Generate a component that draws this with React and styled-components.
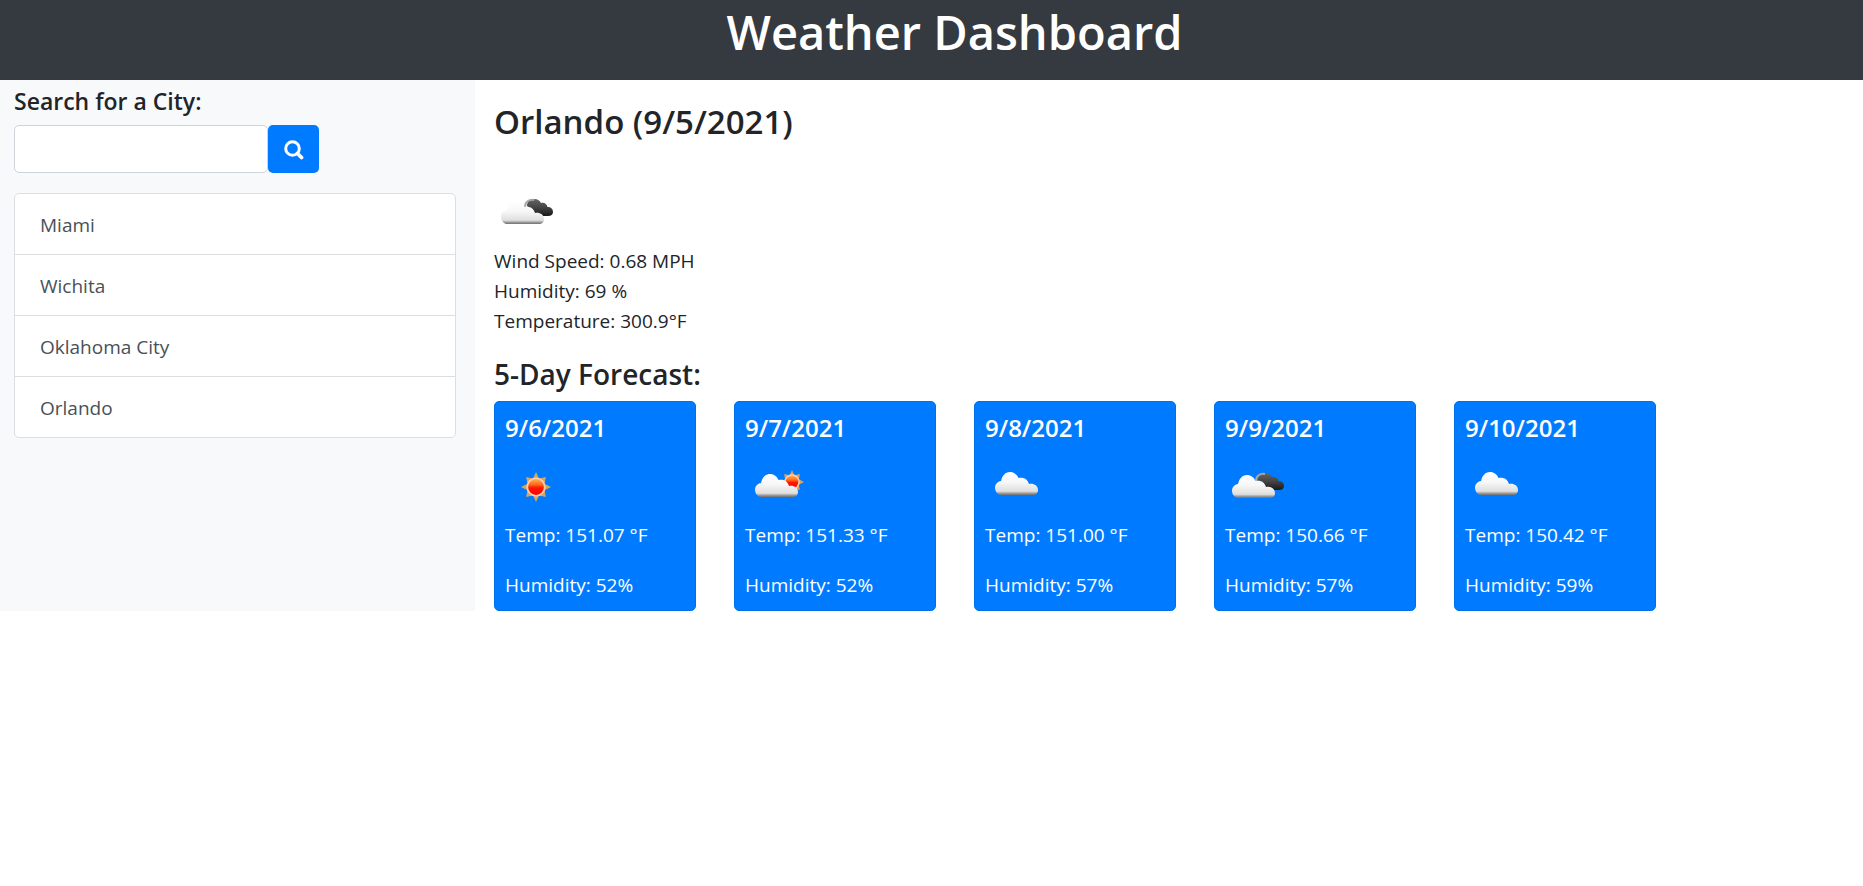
import React from 'react';
import styled, { createGlobalStyle } from 'styled-components';

const GlobalStyle = createGlobalStyle`
  *, *::before, *::after { box-sizing: border-box; }
  body {
    margin: 0;
    background: #fff;
    color: #212529;
    font-family: 'Segoe UI', 'Open Sans', 'Noto Sans', sans-serif;
    font-size: 19px;
    line-height: 30px;
  }
  h1, h2, h3, h4, p, ul { margin: 0; padding: 0; font-weight: 600; }
  p { font-weight: 400; }
`;

const Header = styled.header`
  background: #343a40;
  color: #fff;
  padding: 2px 0 18px 46px;
  text-align: center;
`;

const Title = styled.h1`
  font-size: 47px;
  line-height: 60px;
`;

const Layout = styled.div`
  display: flex;
`;

const Sidebar = styled.aside`
  flex: 0 0 25.5%;
  background: #f8f9fa;
  padding: 6px 19px 0 14px;
`;

const SearchLabel = styled.label`
  display: block;
  margin-bottom: 9px;
  font-size: 23px;
  font-weight: 600;
`;

const SearchForm = styled.form`
  display: flex;
  margin-bottom: 20px;
`;

const SearchInput = styled.input`
  width: 254px;
  height: 48px;
  padding: 8px 15px;
  border: 1px solid #ced4da;
  border-radius: 5px;
  background: #fff;
  color: #495057;
  font: inherit;
`;

const SearchButton = styled.button`
  display: flex;
  align-items: center;
  justify-content: center;
  width: 51px;
  height: 48px;
  padding: 2px 0 0;
  border: 0;
  border-radius: 5px;
  background: #007bff;
  color: #fff;
  cursor: pointer;
`;

const CityList = styled.ul`
  list-style: none;
  border: 1px solid #dcdfe2;
  border-radius: 5px;
  background: #fff;
  overflow: hidden;
`;

const CityItem = styled.li`
  & + & { border-top: 1px solid #dcdfe2; }
`;

const CityButton = styled.button`
  display: block;
  width: 100%;
  padding: 16px 25px 14px;
  border: 0;
  background: transparent;
  color: #495057;
  font: inherit;
  font-weight: 400;
  text-align: left;
  cursor: pointer;
`;

const Main = styled.main`
  flex: 1;
  min-width: 0;
  padding: 21px 19px 0;
`;

const CityHeading = styled.h2`
  margin-bottom: 38px;
  font-size: 33px;
  line-height: 42px;
`;

const ForecastHeading = styled.h3`
  margin: 20px 0 9px;
  font-size: 28px;
  line-height: 36px;
`;

const WeatherIcon = styled.svg`
  display: block;
  width: 62px;
  height: 62px;
  margin-bottom: 3px;
`;

const Cards = styled.div`
  display: flex;
  flex-wrap: wrap;
  gap: 38px;
`;

const Card = styled.article`
  width: 202px;
  padding: 10px;
  border: 1px solid #0070e8;
  border-radius: 5px;
  background: #007bff;
  color: #fff;
`;

const CardDate = styled.h4`
  margin: 1px 0 12px;
  font-size: 24px;
  line-height: 30px;
`;

const CardLine = styled.p`
  & + & { margin-top: 20px; }
`;

const Gradients = () => (
  <svg width="0" height="0" style={{ position: 'absolute' }} aria-hidden="true">
    <defs>
      <linearGradient id="cloud" x1="0" y1="0" x2="0" y2="1">
        <stop offset="0" stopColor="#fff" />
        <stop offset="0.45" stopColor="#f7f7f7" />
        <stop offset="0.84" stopColor="#dedede" />
        <stop offset="0.93" stopColor="#999" />
        <stop offset="1" stopColor="#707070" />
      </linearGradient>
      <linearGradient id="dark" x1="0" y1="0" x2="0" y2="1">
        <stop offset="0" stopColor="#666" />
        <stop offset="0.5" stopColor="#444" />
        <stop offset="1" stopColor="#181818" />
      </linearGradient>
      <linearGradient id="sun" x1="0" y1="0" x2="0" y2="1">
        <stop offset="0" stopColor="#ffb04e" />
        <stop offset="0.35" stopColor="#ff6a20" />
        <stop offset="0.55" stopColor="#ff1500" />
        <stop offset="1" stopColor="#f00" />
      </linearGradient>
    </defs>
  </svg>
);

const Sun = ({ x, y, s = 1 }) => (
  <g transform={`translate(${x} ${y}) scale(${s})`}>
    <path
      fill="#dba35c"
      d="M0-15 3-8.500 9.900-9.900 8.500-3.300 15 0 8.500 3.300 9.900 9.900 3 8.500 0 15-3 8.500-9.900 9.900-8.500 3.300-15 0-8.500-3.300-9.900-9.900-3-8.500Z"
    />
    <circle r="9.600" fill="#ffd0b0" />
    <circle r="7.900" fill="url(#sun)" />
  </g>
);

const Cloud = ({ x, y }) => (
  <path
    transform={`translate(${x} ${y})`}
    fill="url(#cloud)"
    d="M5 23C2 22 0 19 0 16 0 12 2.500 9.500 6 9 7 4 10 0 15 0 19 0 22 2.500 23.500 6 28 4.800 32.500 6.500 34 12 38 11 43 13 43 18 43 21 41 23 38 23Z"
  />
);

const DarkCloud = ({ x, y }) => (
  <g transform={`translate(${x} ${y})`}>
    <path fill="url(#dark)" d="M1 7C1 3 4 0 8 0 12 0 14 2 15 4 18 3 21 5 21.500 8 25 8 27 10 27 13 27 15.500 25 17 22 17H12Z" />
    <path d="M-1 8C-1 3 3 0 8 1" fill="none" stroke="#a6a6a6" strokeWidth="2" />
  </g>
);

const drawings = {
  sun: <Sun x={31} y={32} />,
  partly: (
    <>
      <Sun x={47} y={27} s={0.8} />
      <Cloud x={10} y={19} />
    </>
  ),
  cloudy: <Cloud x={10} y={17} />,
  broken: (
    <>
      <DarkCloud x={32} y={18} />
      <Cloud x={7} y={20} />
    </>
  ),
};

const Weather = ({ kind }) => (
  <WeatherIcon viewBox="0 0 62 62" role="img" aria-label={kind}>
    {drawings[kind]}
  </WeatherIcon>
);

const cities = ['Miami', 'Wichita', 'Oklahoma City', 'Orlando'];

const forecast = [
  { date: '9/6/2021', kind: 'sun', temp: '151.07', humidity: 52 },
  { date: '9/7/2021', kind: 'partly', temp: '151.33', humidity: 52 },
  { date: '9/8/2021', kind: 'cloudy', temp: '151.00', humidity: 57 },
  { date: '9/9/2021', kind: 'broken', temp: '150.66', humidity: 57 },
  { date: '9/10/2021', kind: 'cloudy', temp: '150.42', humidity: 59 },
];

export default function App() {
  return (
    <>
      <GlobalStyle />
      <Gradients />
      <Header>
        <Title>Weather Dashboard</Title>
      </Header>
      <Layout>
        <Sidebar>
          <SearchLabel htmlFor="city">Search for a City:</SearchLabel>
          <SearchForm onSubmit={(e) => e.preventDefault()}>
            <SearchInput id="city" type="text" />
            <SearchButton type="submit" aria-label="Search">
              <svg width="20" height="20" viewBox="0 0 20 20" fill="none" stroke="currentColor" aria-hidden="true">
                <circle cx="8.500" cy="8.500" r="6.800" strokeWidth="3" />
                <path d="M13.500 13.500l4 4" strokeWidth="3.800" strokeLinecap="round" />
              </svg>
            </SearchButton>
          </SearchForm>
          <CityList>
            {cities.map((city) => (
              <CityItem key={city}>
                <CityButton type="button">{city}</CityButton>
              </CityItem>
            ))}
          </CityList>
        </Sidebar>
        <Main>
          <CityHeading>Orlando (9/5/2021)</CityHeading>
          <Weather kind="broken" />
          <p>Wind Speed: 0.68 MPH</p>
          <p>Humidity: 69 %</p>
          <p>Temperature: 300.9°F</p>
          <ForecastHeading>5-Day Forecast:</ForecastHeading>
          <Cards>
            {forecast.map((day) => (
              <Card key={day.date}>
                <CardDate>{day.date}</CardDate>
                <Weather kind={day.kind} />
                <CardLine>Temp: {day.temp} °F</CardLine>
                <CardLine>Humidity: {day.humidity}%</CardLine>
              </Card>
            ))}
          </Cards>
        </Main>
      </Layout>
    </>
  );
}
